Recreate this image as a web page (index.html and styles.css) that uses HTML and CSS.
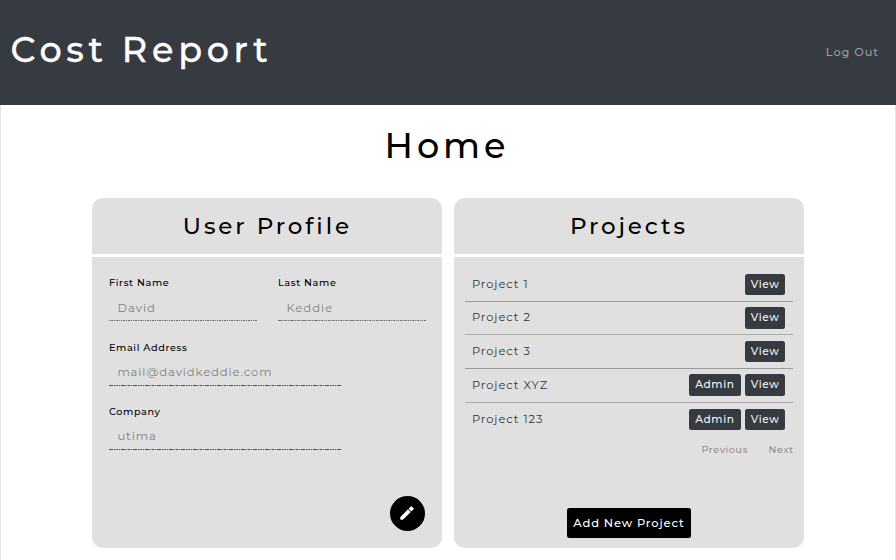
FILE: index.html
```html
<!DOCTYPE html>
<html lang="en">
<head>
<meta charset="utf-8">
<title>Cost Report</title>
<link rel="stylesheet" href="styles.css">
</head>
<body>
<header class="navbar">
  <a class="brand">Cost Report</a>
  <a class="logout">Log Out</a>
</header>
<main class="page">
  <h1 class="page-title">Home</h1>
  <div class="cards">
    <section class="card">
      <h2 class="card-title">User Profile</h2>
      <div class="card-body profile">
        <div class="field"><label class="label">First Name</label><div class="value value-name">David</div></div>
        <div class="field"><label class="label">Last Name</label><div class="value value-name">Keddie</div></div>
        <div class="field field-wide"><label class="label">Email Address</label><div class="value">mail@davidkeddie.com</div></div>
        <div class="field field-wide"><label class="label">Company</label><div class="value">utima</div></div>
        <button class="edit" aria-label="Edit"><svg class="pencil" viewBox="0 0 24 24"><path d="M3 17.800V20q0 1 1 1h2.400L17 10.700l-3.700-3.700zM20.500 7.200c.6-.6.6-1.200 0-1.800l-1.900-1.900c-.6-.6-1.200-.6-1.800 0l-2.700 2.700 3.700 3.700z"/></svg></button>
      </div>
    </section>
    <section class="card">
      <h2 class="card-title">Projects</h2>
      <div class="card-body projects">
        <ul class="list">
          <li class="row"><span class="name">Project 1</span><a class="btn view">View</a></li>
          <li class="row"><span class="name">Project 2</span><a class="btn view">View</a></li>
          <li class="row"><span class="name">Project 3</span><a class="btn view">View</a></li>
          <li class="row"><span class="name">Project XYZ</span><a class="btn admin">Admin</a><a class="btn view">View</a></li>
          <li class="row"><span class="name">Project 123</span><a class="btn admin">Admin</a><a class="btn view">View</a></li>
        </ul>
        <nav class="pager"><a>Previous</a><a>Next</a></nav>
        <button class="add">Add New Project</button>
      </div>
    </section>
  </div>
</main>
</body>
</html>
```
FILE: styles.css
```css
* { box-sizing: border-box; }
body {
  margin: 0;
  height: 560px;
  overflow: hidden;
  background: #fff;
  color: #000;
  font-family: Montserrat, Inter, "Liberation Sans", sans-serif;
}
.navbar {
  height: 105px;
  padding: 0 17px 0 10.500px;
  display: flex;
  align-items: center;
  justify-content: space-between;
  background: #363a41;
}
.brand {
  color: #fff;
  font-size: 35px;
  line-height: 42px;
  font-weight: 500;
  letter-spacing: 4.700px;
  padding-bottom: 5px;
  -webkit-text-stroke: 0.300px #fff;
}
.logout {
  color: #9a9da3;
  font-size: 11.400px;
  font-weight: 500;
  letter-spacing: 0.900px;
  padding: 0 0 2px;
}
.page {
  height: 455px;
  border: 1px solid #e4e4e4;
  border-width: 0 1px;
}
.page-title {
  margin: 0;
  padding: 20px 2px 0 0;
  height: 93px;
  text-align: center;
  font-size: 35px;
  line-height: 42px;
  font-weight: 500;
  letter-spacing: 4px;
}
.cards {
  display: grid;
  grid-template-columns: 350px 350px;
  gap: 11.500px;
  margin-left: 91.400px;
}
.card {
  height: 350px;
  display: flex;
  flex-direction: column;
  gap: 3px;
}
.card-title {
  margin: 0;
  height: 56px;
  line-height: 57px;
  text-align: center;
  font-size: 23px;
  font-weight: 500;
  letter-spacing: 2.900px;
  background: #e0e0e0;
  border-radius: 11px 11px 0 0;
}
.card-body {
  height: 291px;
  background: #e0e0e0;
  border-radius: 0 0 11px 11px;
}
.profile {
  padding: 18px 16.500px 17px;
  display: grid;
  grid-template-columns: 148px 148px;
  grid-template-rows: 64.600px 64.400px 64px 1fr;
  column-gap: 21px;
}
.field-wide { grid-column: 1 / 3; width: 233px; }
.label {
  display: block;
  height: 15px;
  line-height: 15px;
  font-size: 9.700px;
  font-weight: 500;
  letter-spacing: 0.640px;
}
.value {
  height: 31px;
  padding-left: 8.500px;
  line-height: 35px;
  font-size: 11.600px;
  letter-spacing: 0.900px;
  color: #808080;
  background: repeating-linear-gradient(90deg, #505050 0 1.600px, #c4c4c4 1.600px 2.400px) bottom / 100% 1px no-repeat;
}
.value-name {
  line-height: 36px;
  letter-spacing: 1px;
  background-image: repeating-linear-gradient(90deg, #707070 0 1.500px, #ccc 1.500px 2.400px);
}
.edit {
  grid-column: 2;
  justify-self: end;
  align-self: end;
  width: 35px;
  height: 35px;
  margin-right: 1px;
  padding: 0 0 1px;
  border: 0;
  border-radius: 50%;
  background: #000;
  display: grid;
  place-items: center;
}
.pencil { width: 18px; height: 18px; fill: #fff; }
.projects {
  padding: 11px 11px 10px;
  display: flex;
  flex-direction: column;
}
.list { list-style: none; margin: 0; padding: 0; }
.row {
  height: 33.650px;
  padding: 0 7.500px 0 7px;
  display: flex;
  align-items: center;
  gap: 4px;
  border-bottom: 1px solid #999;
}
.row:nth-child(even) { border-color: #aaa; }
.row:last-child { border-bottom: 0; }
.name {
  flex: 1;
  font-size: 11.400px;
  letter-spacing: 1px;
  line-height: 14.500px;
  padding-bottom: 0.500px;
  color: #333;
}
.btn {
  height: 21.500px;
  line-height: 21.500px;
  border-radius: 2.500px;
  background: #363a41;
  color: #f5f5f5;
  font-size: 10.600px;
  font-weight: 500;
  letter-spacing: 0.600px;
  text-align: center;
}
.view { width: 40.500px; }
.admin { width: 52px; }
.pager {
  height: 28px;
  margin-right: -1px;
  display: flex;
  justify-content: flex-end;
  gap: 20.500px;
  line-height: 27px;
  font-size: 9.600px;
  letter-spacing: 0.700px;
  color: #777;
}
.add {
  width: 124px;
  height: 30px;
  margin: auto auto 0;
  padding: 0;
  border: 0;
  border-radius: 2.500px;
  background: #000;
  color: #fff;
  font-family: inherit;
  font-size: 11.500px;
  font-weight: 500;
  letter-spacing: 0.850px;
  white-space: nowrap;
}
```
